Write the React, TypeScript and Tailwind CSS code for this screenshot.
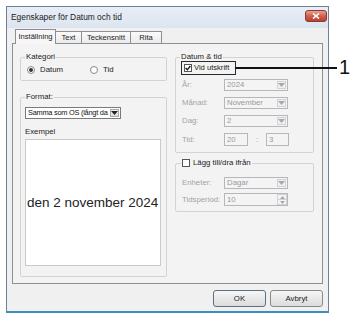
import React from "react";

function Arrow({ color = "#6f6f6f" }: { color?: string }) {
  return (
    <svg width="7" height="4" viewBox="0 0 7 4">
      <path d="M0 0 H7 L3.5 4 Z" fill={color} />
    </svg>
  );
}

function Combo({ value, disabled, w = "w-[64px]", tight }: { value: string; disabled?: boolean; w?: string; tight?: boolean }) {
  return (
    <div
      className={
        "flex h-[12px] " +
        w +
        (disabled ? " border border-[#b4b8bc] bg-[#f4f4f4] text-[#9a9a9a]" : " border border-[#7a7a7a] bg-white text-[#111]")
      }
    >
      <div
        className={
          "flex-1 overflow-hidden whitespace-nowrap pl-[2px] leading-[10px] " +
          (tight ? "text-[7.4px] tracking-[-0.25px]" : "text-[7.8px]")
        }
      >
        {value}
      </div>
      <div
        className={
          "m-[1px] flex w-[9px] items-center justify-center border " +
          (disabled ? "border-[#d2d2d2] bg-[#f0f0f0]" : "border-[#a8a8a8] bg-gradient-to-b from-[#f6f6f6] to-[#dcdcdc]")
        }
      >
        <Arrow color={disabled ? "#a8a8a8" : "#222"} />
      </div>
    </div>
  );
}

function Field({ value, w }: { value: string; w: string }) {
  return (
    <div className={"h-[13px] border border-[#b4b8bc] bg-[#f4f4f4] pl-[2px] text-[7.8px] leading-[11px] text-[#9a9a9a] " + w}>
      {value}
    </div>
  );
}

function Row({ label, children }: { label: string; children: React.ReactNode }) {
  return (
    <div className="flex items-center">
      <div className="w-[42px] text-[7.8px] leading-[10px] text-[#a3a3a3]">{label}</div>
      {children}
    </div>
  );
}

function Checkbox({ checked }: { checked?: boolean }) {
  return (
    <div className="flex h-[8px] w-[8px] items-center justify-center border border-[#555] bg-white">
      {checked && (
        <svg width="6" height="6" viewBox="0 0 6 6">
          <path d="M0.6 3 L2.3 4.8 L5.4 1" stroke="#111" strokeWidth="1.3" fill="none" />
        </svg>
      )}
    </div>
  );
}

function Radio({ checked }: { checked?: boolean }) {
  return (
    <div className="flex h-[8px] w-[8px] items-center justify-center rounded-full border border-[#8a8a8a] bg-white">
      {checked && <div className="h-[4px] w-[4px] rounded-full bg-[#333]" />}
    </div>
  );
}

export default function App() {
  return (
    <div className="relative h-[319px] w-[360px] overflow-hidden bg-white pl-[6px] pt-[6px] font-['Liberation_Sans',Arial,sans-serif] text-[#1b1b1b]">
      <div className="flex h-[307px] w-[323px] flex-col border border-[#6f8096] border-b-2 border-b-[#3d8fbf] bg-[#f0f0f0]">
        {/* title bar */}
        <div className="flex h-[21px] items-start justify-between bg-gradient-to-b from-[#e8eef6] to-[#dce5ef] pl-[4px] pr-[1px]">
          <div className="mt-[5px] text-[8.4px] leading-[10px] text-[#1a1a1a]">Egenskaper för Datum och tid</div>
          <div className="mt-[3px] flex h-[12px] w-[22px] items-center justify-center rounded-[3px] border border-[#8a3a32] bg-gradient-to-b from-[#e8a090] via-[#d0604f] to-[#b8402f]">
            <svg width="8" height="6" viewBox="0 0 8 6">
              <path d="M1 0.5 L7 5.5 M7 0.5 L1 5.5" stroke="#fff" strokeWidth="1.6" />
            </svg>
          </div>
        </div>

        <div className="flex flex-1 flex-col px-[5px]">
          {/* tabs */}
          <div className="mt-[1px] flex h-[14px] items-end pl-[3px]">
            <div className="relative z-10 -mb-[1px] flex h-[15px] w-[41px] items-center justify-center border border-b-0 border-[#8c8f96] bg-[#f7f7f7] text-[7.6px] leading-[10px]">
              Inställning
            </div>
            <div className="flex h-[12px] w-[26px] items-center justify-center border-r border-t border-[#8c8f96] bg-gradient-to-b from-[#fafafa] to-[#ebebeb] text-[7.6px] leading-[10px]">
              Text
            </div>
            <div className="flex h-[12px] w-[49px] items-center justify-center border-r border-t border-[#8c8f96] bg-gradient-to-b from-[#fafafa] to-[#ebebeb] text-[7.6px] leading-[10px]">
              Teckensnitt
            </div>
            <div className="flex h-[12px] w-[31px] items-center justify-center border-r border-t border-[#8c8f96] bg-gradient-to-b from-[#fafafa] to-[#ebebeb] text-[7.6px] leading-[10px]">
              Rita
            </div>
          </div>

          {/* panel */}
          <div className="flex h-[241px] border border-[#8c8f96] bg-[#f3f3f3] pl-[7px] pt-[8px]">
            {/* left column */}
            <div className="flex w-[147px] flex-col">
              <fieldset className="h-[29px] rounded-[2px] border border-[#d3d3d3]">
                <legend className="ml-[4px] px-[1px] text-[7.8px] leading-[10px]">Kategori</legend>
                <div className="mt-[3px] flex h-[10px] items-center pl-[6px] text-[7.8px] leading-[10px]">
                  <div className="flex w-[63px] items-center gap-[5px]">
                    <Radio checked />
                    <span>Datum</span>
                  </div>
                  <div className="flex items-center gap-[5px]">
                    <Radio />
                    <span>Tid</span>
                  </div>
                </div>
              </fieldset>

              <fieldset className="mt-[11px] h-[185px] rounded-[2px] border border-[#d3d3d3]">
                <legend className="ml-[4px] px-[1px] text-[7.8px] leading-[10px]">Format:</legend>
                <div className="ml-[4px] mt-[5px]">
                  <Combo value="Samma som OS (långt da" w="w-[96px]" tight />
                </div>
                <div className="ml-[4px] mt-[8px] text-[7.8px] leading-[10px]">Exempel</div>
                <div className="ml-[4px] mt-[2px] flex h-[127px] w-[136px] items-center border border-[#c9c9c9] bg-white pl-[1px]">
                  <span className="whitespace-nowrap text-[13.5px] leading-[16px] text-[#222]">den 2 november 2024</span>
                </div>
              </fieldset>
            </div>

            {/* right column */}
            <div className="ml-[8px] flex w-[139px] flex-col">
              <fieldset className="h-[101px] rounded-[2px] border border-[#d3d3d3]">
                <legend className="ml-[4px] px-[1px] text-[7.8px] leading-[10px]">Datum &amp; tid</legend>
                <div className="-mt-[1px] ml-[5px] flex h-[14px] w-[55px] items-center gap-[2px] border border-[#2a2a2a] pl-[2px] text-[7.6px] leading-[10px]">
                  <Checkbox checked />
                  <span className="whitespace-nowrap">Vid utskrift</span>
                </div>
                <div className="ml-[6px] mt-[4px] flex flex-col gap-[6px]">
                  <Row label="År:">
                    <Combo value="2024" disabled />
                  </Row>
                  <Row label="Månad:">
                    <Combo value="November" disabled />
                  </Row>
                  <Row label="Dag:">
                    <Combo value="2" disabled />
                  </Row>
                  <Row label="Tid:">
                    <Field value="20" w="w-[24px]" />
                    <span className="w-[18px] text-center text-[7.8px] leading-[10px] text-[#9a9a9a]">:</span>
                    <Field value="3" w="w-[23px]" />
                  </Row>
                </div>
              </fieldset>

              <fieldset className="mt-[5px] h-[54px] rounded-[2px] border border-[#d3d3d3]">
                <legend className="ml-[5px] px-[1px]">
                  <div className="flex h-[10px] items-center gap-[3px] text-[7.8px] leading-[10px]">
                    <Checkbox />
                    <span className="whitespace-nowrap">Lägg till/dra ifrån</span>
                  </div>
                </legend>
                <div className="ml-[6px] mt-[9px] flex flex-col gap-[4px]">
                  <Row label="Enheter:">
                    <Combo value="Dagar" disabled />
                  </Row>
                  <Row label="Tidsperiod:">
                    <div className="flex h-[13px] w-[64px] border border-[#b4b8bc] bg-[#f4f4f4]">
                      <div className="flex-1 pl-[2px] text-[7.8px] leading-[11px] text-[#9a9a9a]">10</div>
                      <div className="flex w-[10px] flex-col">
                        <div className="flex flex-1 items-center justify-center border border-[#d2d2d2]">
                          <svg width="5" height="3" viewBox="0 0 5 3">
                            <path d="M0 3 H5 L2.5 0 Z" fill="#a8a8a8" />
                          </svg>
                        </div>
                        <div className="flex flex-1 items-center justify-center border border-t-0 border-[#d2d2d2]">
                          <svg width="5" height="3" viewBox="0 0 5 3">
                            <path d="M0 0 H5 L2.5 3 Z" fill="#a8a8a8" />
                          </svg>
                        </div>
                      </div>
                    </div>
                  </Row>
                </div>
              </fieldset>
            </div>
          </div>

          {/* buttons */}
          <div className="mt-[6px] flex justify-end gap-[4px]">
            <button className="h-[17px] w-[53px] rounded-[3px] border border-[#5c6f86] bg-gradient-to-b from-[#f6f6f6] to-[#dcdcdc] text-[7.8px] leading-[10px] text-[#1b1b1b]">
              OK
            </button>
            <button className="h-[17px] w-[53px] rounded-[3px] border border-[#8a8a8a] bg-gradient-to-b from-[#f6f6f6] to-[#dcdcdc] text-[7.8px] leading-[10px] text-[#1b1b1b]">
              Avbryt
            </button>
          </div>
        </div>
      </div>

      {/* callout */}
      <div className="absolute left-[235px] top-[67px] h-[1.5px] w-[102px] bg-[#111]" />
      <div className="absolute left-[339px] top-[56px] text-[20px] leading-[22px] text-[#111]">1</div>
    </div>
  );
}
